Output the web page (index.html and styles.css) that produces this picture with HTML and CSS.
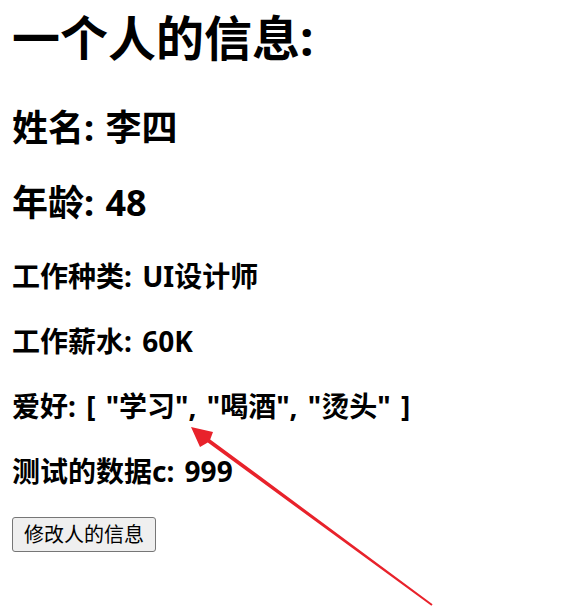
FILE: index.html
```html
<!DOCTYPE html>
<html lang="zh">
<head>
<meta charset="utf-8">
<link rel="stylesheet" href="styles.css">
</head>
<body>
<div class="app">
  <h1 class="title">一个人的信息:</h1>
  <h2 class="big first">姓名: 李四</h2>
  <h2 class="big">年龄: 48</h2>
  <h3 class="mid first">工作种类: UI设计师</h3>
  <h3 class="mid">工作薪水: 60K</h3>
  <h3 class="mid">爱好: [ "学习", "喝酒", "烫头" ]</h3>
  <h3 class="mid">测试的数据c: 999</h3>
  <div class="actions"><button class="btn">修改人的信息</button></div>
</div>
<svg class="arrow" width="587" height="609" viewBox="0 0 587 609">
  <polygon fill="#e8222b" points="191,427 213,432 210.2,439.4 432.6,604.2 431.4,605.8 207.8,442.6 200,447"/>
</svg>
</body>
</html>
```
FILE: styles.css
```css
html, body {
  margin: 0;
  padding: 0;
  background: #ffffff;
}
body {
  font-family: "Noto Sans", "Noto Sans CJK SC", sans-serif;
  color: #000;
  position: relative;
  width: 587px;
  height: 609px;
  overflow: hidden;
}
.app {
  display: flex;
  flex-direction: column;
  align-items: flex-start;
  padding: 8px 12px 0 12px;
}
.title {
  font-size: 48px;
  line-height: 60px;
  font-weight: 700;
  margin: 0;
}
.big {
  font-size: 36px;
  line-height: 45px;
  font-weight: 700;
  word-spacing: 2px;
  margin: 30px 0 0 0;
}
.big.first {
  margin-top: 37px;
}
.mid {
  font-size: 28px;
  line-height: 35px;
  font-weight: 700;
  word-spacing: 3px;
  margin: 30px 0 0 0;
}
.mid.first {
  margin-top: 34px;
}
.actions {
  margin-top: 28px;
}
.btn {
  font-family: "Noto Sans CJK SC", sans-serif;
  font-size: 20px;
  line-height: 26px;
  padding: 3px 11px 4px 11px;
  background: #efefef;
  border: 1px solid #767676;
  border-radius: 3px;
  color: #000;
  margin: 0;
}
.arrow {
  position: absolute;
  left: 0;
  top: 0;
}
```
